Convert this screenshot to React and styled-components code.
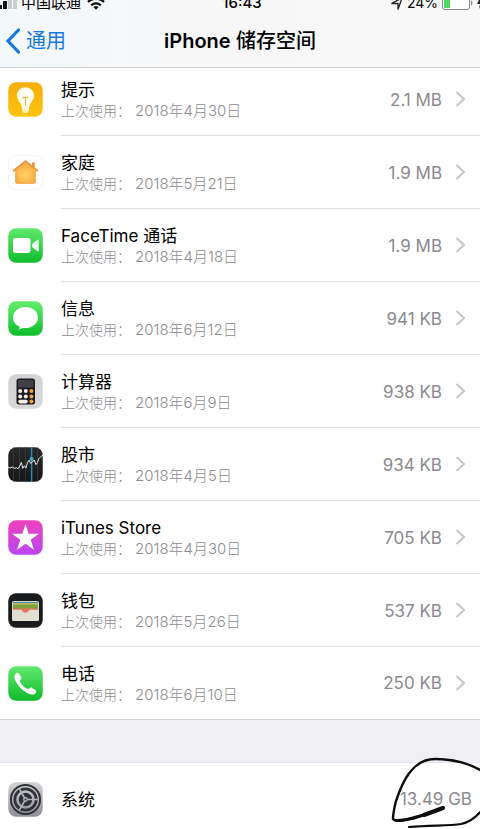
import React from 'react';
import styled, { createGlobalStyle } from 'styled-components';

const GlobalStyle = createGlobalStyle`
  * { box-sizing: border-box; }
  body {
    margin: 0;
    background: #efeff4;
    color: #000;
    font-family: Inter, 'Noto Sans CJK SC', sans-serif;
  }
`;

const Screen = styled.div`
  height: 100vh;
  overflow-x: hidden;
  overflow-y: auto;
  scrollbar-width: none;
`;

// ---- top bars --------------------------------------------------------------
const Header = styled.header`
  position: sticky;
  top: 0;
  z-index: 1;
  height: 68px;
  overflow: hidden;
  background: linear-gradient(90deg, #f3f8fa, #f7f7f8 40%, #f8f8f8);
  border-bottom: 1px solid #cfd0d2;
`;

const StatusBar = styled.div`
  display: grid;
  grid-template-columns: 1fr auto 1fr;
  align-items: center;
  height: 20px;
  margin-top: -7px;
  font-size: 15px;
  line-height: 20px;
  white-space: nowrap;
`;

const StatusGroup = styled.div`
  display: flex;
  align-items: center;
  gap: 4px;
  justify-content: ${props => props.$end ? 'flex-end' : 'flex-start'};
  > svg { flex: none; }
`;

const Carrier = styled.span`
  margin-right: 2px;
`;

const Battery = styled.span`
  font-size: 14px;
`;

const Clock = styled.time`
  padding-left: 4px;
  font-weight: 500;
`;

const NavBar = styled.nav`
  display: grid;
  grid-template-columns: 1fr auto 1fr;
  align-items: center;
  height: 56px;
  padding: 0 6px;
`;

const BackLink = styled.a`
  display: flex;
  align-items: center;
  gap: 6px;
  color: #1778e2;
  font-size: 20px;
  line-height: 28px;
  text-decoration: none;
`;

const Title = styled.h1`
  margin: 0;
  font-size: 20px;
  line-height: 28px;
  font-weight: 500;
  b { font-weight: 600; }
`;

// ---- list ------------------------------------------------------------------
const AppList = styled.ul`
  margin: -5px 0 0;
  padding: 0;
  list-style: none;
  background: #fff;
  border-bottom: 1px solid #d3d3d8;
`;

const Row = styled.li`
  height: 73px;
  padding-left: 8px;
  &:last-child { height: 72px; }
`;

const RowLink = styled.a`
  display: flex;
  align-items: center;
  gap: 18px;
  height: 100%;
  color: inherit;
  text-decoration: none;
  > svg { flex: none; }
`;

const RowBody = styled.div`
  flex: 1;
  display: flex;
  align-items: center;
  align-self: stretch;
  gap: 13px;
  padding-right: ${props => props.$plain ? 8 : 14}px;
  border-bottom: 1px solid ${props => props.$last ? 'transparent' : '#dfdfe2'};
`;

const Labels = styled.div`
  flex: 1;
  padding-top: 2px;
`;

const Name = styled.div`
  font-size: 17px;
  line-height: 22px;
`;

const LastUsed = styled.div`
  display: flex;
  gap: 4px;
  color: #8c8c91;
  font-size: 14px;
  font-weight: 300;
  line-height: 20px;
`;

const UsedDate = styled.time`
  font-size: 15px;
`;

const Size = styled.span`
  padding-top: 1px;
  color: #8a8a8f;
  font-size: 17px;
  line-height: 22px;
`;

const SystemSection = styled.section`
  position: relative;
  margin-top: 42px;
  background: #fff;
  border-top: 1px solid #e3e3ec;
`;

const SystemRow = styled.div`
  display: flex;
  align-items: center;
  gap: 18px;
  height: 72px;
  padding-left: 8px;
`;

const Ink = styled.svg`
  position: absolute;
  top: -6px;
  right: 0;
  pointer-events: none;
`;

// ---- icons -----------------------------------------------------------------
const Tile = ({ id, from, to, stroke, children }) => (
  <svg width="35" height="35" viewBox="0 0 35 35" aria-hidden="true">
    <defs>
      <linearGradient id={id} x1="0" y1="0" x2="0" y2="1">
        <stop offset="0" stopColor={from} />
        <stop offset="1" stopColor={to} />
      </linearGradient>
      <clipPath id={`${id}-clip`}><rect width="35" height="35" rx="8" /></clipPath>
    </defs>
    <rect x="0.25" y="0.25" width="34.5" height="34.5" rx="8" fill={`url(#${id})`} stroke={stroke || 'none'} strokeWidth="0.7" />
    <g clipPath={`url(#${id}-clip)`}>{children}</g>
  </svg>
);

const TipsIcon = () => (
  <Tile id="tips" from="#f7ad0c" to="#fcc50d">
    <path d="M17.5 5.3c-5 0-8.6 3.7-8.6 8.3 0 3.4 2 5.2 3.5 7.7 1 1.700 1.200 3.200 1.600 4.600v2h7v-2c.4-1.400.6-2.900 1.600-4.600 1.500-2.500 3.500-4.300 3.500-7.700 0-4.600-3.600-8.300-8.600-8.300z" fill="#fffdf0" />
    <path d="M14.300 27h6.400v1.500c0 1.500-1.300 2.700-3.200 2.700s-3.200-1.200-3.200-2.700z" fill="#fff3c4" />
    <path d="M14.500 15.500h6M17.500 15.500v9" stroke="#e8ba45" strokeWidth="1.100" fill="none" />
  </Tile>
);

const HomeIcon = () => (
  <Tile id="home" from="#ffffff" to="#ffffff" stroke="#efefef">
    <defs>
      <radialGradient id="home-glow" cx="0.5" cy="0.6" r="0.6">
        <stop offset="0" stopColor="#ffd06a" />
        <stop offset="1" stopColor="#f5a238" />
      </radialGradient>
    </defs>
    <path d="M24 7.500h2.800v5H24z" fill="#e9983f" />
    <path d="M17.500 5.800L30 16.300h-2.500V27c0 1-.7 1.600-1.600 1.600H9.100c-.9 0-1.600-.6-1.600-1.600V16.300H5z" fill="url(#home-glow)" />
    <path d="M5 16.200L17.500 5.900 30 16.200" fill="none" stroke="#e99438" strokeWidth="1.500" />
    <path d="M7.900 16v11c0 .8.500 1.200 1.200 1.200h16.800c.7 0 1.200-.4 1.200-1.200V16" fill="none" stroke="#eba044" strokeWidth="1" />
  </Tile>
);

const FaceTimeIcon = () => (
  <Tile id="facetime" from="#5fea6d" to="#0fbd2c">
    <rect x="5" y="10" width="17.500" height="15" rx="2.500" fill="#fff" />
    <path d="M24 16l5.500-4.300c.7-.5 1.300-.2 1.300.6v10.400c0 .8-.6 1.100-1.300.6L24 19z" fill="#e8ffe9" />
  </Tile>
);

const MessagesIcon = () => (
  <Tile id="messages" from="#66ed6e" to="#0dbd2a">
    <ellipse cx="17.500" cy="16.500" rx="12.500" ry="10.500" fill="#fff" />
    <path d="M12 24.500c0 2-.8 3-2.300 4 2.700 0 5-1 6.200-2.800z" fill="#fff" />
  </Tile>
);

const CalculatorIcon = () => (
  <Tile id="calculator" from="#d3d3d3" to="#d8d8d8">
    <rect x="8.500" y="4.500" width="18.500" height="26" rx="2.500" fill="#1d1c20" />
    <rect x="10" y="6" width="15.500" height="7.500" rx="1" fill="#414044" />
    {[17, 22.5].map(y => (
      <g key={y}>
        <circle cx="12.200" cy={y} r="2" fill="#f1eeea" />
        <circle cx="17.800" cy={y} r="2" fill="#f1eeea" />
        <circle cx="23.400" cy={y} r="2" fill="#f0a13c" />
      </g>
    ))}
    <rect x="10.200" y="25.800" width="9.600" height="3.600" rx="1.800" fill="#f1eeea" />
    <circle cx="23.400" cy="27.600" r="2" fill="#f0a13c" />
  </Tile>
);

const StocksIcon = () => (
  <Tile id="stocks" from="#28292b" to="#151618">
    <path d="M5.500 0v35M11.500 0v35M17.500 0v35M29.500 0v35" stroke="#3b3d40" strokeWidth="0.800" />
    <path d="M23.600 0v35" stroke="#2d86ad" strokeWidth="1.500" />
    <path d="M0 20l2.200 1 2-1 2.300 1.300 2-.6 1.500 1.200 1.800-3 1.500-3.500 1.500 6 1.600-2.600 1.600 2.300 1.300-5 1.800-3 1.600 3.400 1.800-1.500 1.800-2 1.600 4.600 1.500-2 1.500-4 1.500-1.500 2.600-2" fill="none" stroke="#e8e8e8" strokeWidth="1" strokeLinejoin="round" />
    <circle cx="23.600" cy="12" r="2" fill="#45a9d0" />
  </Tile>
);

const ITunesIcon = () => (
  <Tile id="itunes" from="#ee43bb" to="#b946f0">
    <path d="M17.500 4l3.200 9.700h10.300l-8.300 6.100 3.300 10-8.500-6.100-8.500 6.100 3.300-10L4 13.700h10.300z" fill="#fff" />
  </Tile>
);

const WalletIcon = () => (
  <Tile id="wallet" from="#1a1b1d" to="#1a1b1d">
    <rect x="4" y="8" width="27" height="20" rx="1.800" fill="#d9d6cb" />
    <rect x="5" y="9" width="25" height="1.500" fill="#3f8fa9" />
    <rect x="5" y="10.300" width="25" height="1.400" fill="#d8b545" />
    <rect x="5" y="11.500" width="25" height="4.500" fill="#7ea23c" />
    <rect x="5" y="15.500" width="25" height="5" fill="#e8735d" />
    <path d="M4 16.800h8.200c1.200 0 1.700.5 2.300 1.300.7 1 1.700 1.600 3 1.600s2.300-.6 3-1.600c.6-.8 1.100-1.300 2.300-1.300H31V26.200c0 1-.8 1.800-1.800 1.800H5.800C4.800 28 4 27.200 4 26.200z" fill="#e1ded4" />
  </Tile>
);

const PhoneIcon = () => (
  <Tile id="phone" from="#62e96e" to="#0fbb2b">
    <path d="M7.300 8.200c1.300-1.700 2.800-1.900 3.800-.5l2 3.200c.7 1.200.4 2-.6 3-.8.8-.7 1.500-.1 2.500 1.500 2.600 3.700 4.700 6.300 6.200 1 .6 1.700.7 2.500-.1 1-1 1.900-1.200 3-.6l3.200 2c1.400 1 1.200 2.500-.5 3.800-1.700 1.300-4.100 1.100-7.300-.5-5-2.500-9.200-6.700-11.800-11.700-1.600-3.200-1.800-5.600-.5-7.300z" fill="#fff" />
  </Tile>
);

const SettingsIcon = () => (
  <Tile id="settings" from="#d2d3d5" to="#8f9094">
    <circle cx="17.500" cy="17.500" r="14.600" fill="none" stroke="#303237" strokeWidth="2" />
    <circle cx="17.500" cy="17.500" r="10.700" fill="none" stroke="#303237" strokeWidth="2.800" />
    <circle cx="17.500" cy="17.500" r="6.800" fill="#303237" />
    {[0, 120, 240].map(a => (
      <path key={a} d="M17.500 17.500h12" stroke="#b4b5b8" strokeWidth="1.600" transform={`rotate(${a} 17.5 17.5)`} />
    ))}
    <circle cx="17.500" cy="17.500" r="2.400" fill="#b4b5b8" />
    <circle cx="17.500" cy="17.500" r="1" fill="#303237" />
  </Tile>
);

const Chevron = () => (
  <svg width="11" height="18" viewBox="0 0 11 18" fill="none" aria-hidden="true">
    <path d="M1.500 2l7.500 7-7.500 7" stroke="#c5c5ca" strokeWidth="2" />
  </svg>
);

const apps = [
  { name: '提示', date: '2018年4月30日', size: '2.1 MB', Icon: TipsIcon },
  { name: '家庭', date: '2018年5月21日', size: '1.9 MB', Icon: HomeIcon },
  { name: 'FaceTime 通话', date: '2018年4月18日', size: '1.9 MB', Icon: FaceTimeIcon },
  { name: '信息', date: '2018年6月12日', size: '941 KB', Icon: MessagesIcon },
  { name: '计算器', date: '2018年6月9日', size: '938 KB', Icon: CalculatorIcon },
  { name: '股市', date: '2018年4月5日', size: '934 KB', Icon: StocksIcon },
  { name: 'iTunes Store', date: '2018年4月30日', size: '705 KB', Icon: ITunesIcon },
  { name: '钱包', date: '2018年5月26日', size: '537 KB', Icon: WalletIcon },
  { name: '电话', date: '2018年6月10日', size: '250 KB', Icon: PhoneIcon },
];

const App = () => (
  <Screen>
    <GlobalStyle />
    <Header>
      <StatusBar>
        <StatusGroup>
          <svg width="17" height="12" viewBox="0 0 17 12" aria-hidden="true">
            <path d="M0 8h2v4H0zM3 4h4v8H3z" fill="#111" />
            <path d="M8 2h4v10H8zM13 0h4v12h-4z" fill="#c9cbcd" />
          </svg>
          <Carrier>中国联通</Carrier>
          <svg width="18" height="13" viewBox="0 0 18 13" fill="none" stroke="#111" strokeWidth="2.200" aria-hidden="true">
            <path d="M1 5a11.500 11.500 0 0 1 16 0M4.200 8.300a7 7 0 0 1 9.600 0" />
            <path d="M9 12.800L6.500 10.300a3.600 3.600 0 0 1 5 0z" fill="#111" stroke="none" />
          </svg>
        </StatusGroup>
        <Clock>16:43</Clock>
        <StatusGroup $end>
          <svg width="13" height="13" viewBox="0 0 13 13" aria-hidden="true">
            <path d="M12 1L8 12.500V6.500H1.500z" fill="none" stroke="#222" strokeWidth="1.300" />
          </svg>
          <Battery>24%</Battery>
          <svg width="38" height="14" viewBox="0 0 38 14" aria-hidden="true">
            <rect x="0.500" y="0.500" width="27" height="13" rx="2.500" fill="#fff" stroke="#8b8d8f" />
            <rect x="2" y="2" width="6" height="10" rx="1" fill="#4cd964" />
            <path d="M29 4.500c2 .5 2 4.500 0 5z" fill="#8b8d8f" />
            <path d="M39 0l-4 8h3l-1 5 4-7z" fill="#222" />
          </svg>
        </StatusGroup>
      </StatusBar>
      <NavBar>
        <BackLink href="#general">
          <svg width="14" height="26" viewBox="0 0 14 26" fill="none" aria-hidden="true">
            <path d="M12.500 2L2 13l10.500 11" stroke="#1778e2" strokeWidth="3.200" strokeLinecap="round" />
          </svg>
          通用
        </BackLink>
        <Title><b>iPhone</b> 储存空间</Title>
      </NavBar>
    </Header>

    <main>
      <AppList>
        {apps.map(({ name, date, size, Icon }, i) => (
          <Row key={name}>
            <RowLink href={`#app-${i}`}>
              <Icon />
              <RowBody $last={i === apps.length - 1}>
                <Labels>
                  <Name>{name}</Name>
                  <LastUsed><span>上次使用：</span><UsedDate>{date}</UsedDate></LastUsed>
                </Labels>
                <Size>{size}</Size>
                <Chevron />
              </RowBody>
            </RowLink>
          </Row>
        ))}
      </AppList>

      <SystemSection>
        <SystemRow>
          <SettingsIcon />
          <RowBody $plain $last>
            <Labels><Name>系统</Name></Labels>
            <Size>13.49 GB</Size>
          </RowBody>
        </SystemRow>
        <Ink width="90" height="74" viewBox="390 755 90 74" fill="none" stroke="#0b0b0b" strokeLinecap="round" strokeLinejoin="round" aria-hidden="true">
          <path d="M482 769C470 762 453 757 435 757C412 757 402 781 396 799C394 807 393 813 393 817C395 820 406 818 415 816" strokeWidth="2.400" />
          <path d="M396 818.500C407 819 425 813 443 806" strokeWidth="3" />
          <path d="M424 813L443 806" strokeWidth="4" />
          <path d="M409 825C430 823 448 824 461 822C471 820 477 814 482 808" strokeWidth="2.200" />
        </Ink>
      </SystemSection>
    </main>
  </Screen>
);

export default App;
